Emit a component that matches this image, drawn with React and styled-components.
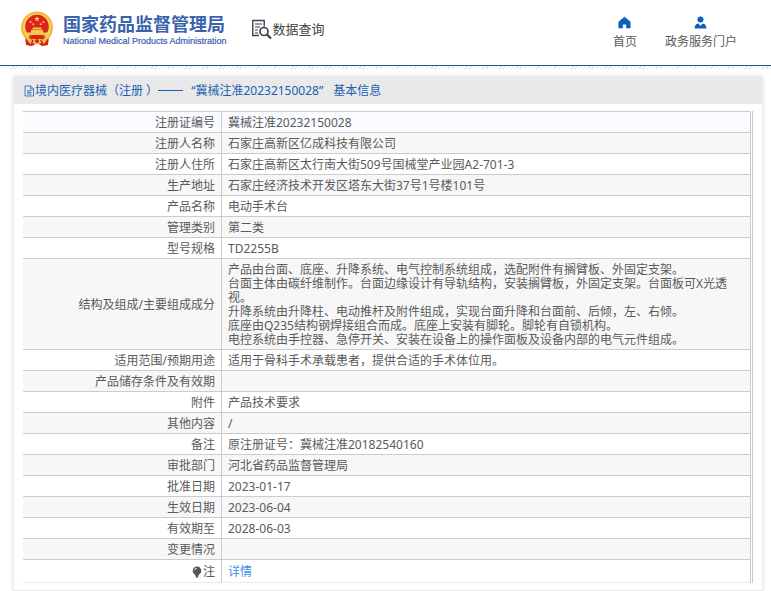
import React from "react";
import styled, { createGlobalStyle } from "styled-components";

const GlobalStyle = createGlobalStyle`
    * {
        box-sizing: border-box;
    }

    body {
        margin: 0;
        background: #ffffff;
        color: #5a5a5a;
        font-family: "Noto Sans", "Noto Sans CJK SC", sans-serif;
        font-size: 12px;
        line-height: 14px;
    }

    a {
        text-decoration: none;
    }
`;

const Header = styled.header`
    display: flex;
    align-items: center;
    height: 66px;
    padding: 0 34px 8px 20px;
    border-bottom: 1px solid #1d5a93;
`;

const HatchStrip = styled.div`
    height: 3px;
    margin-bottom: 7px;
    background: repeating-linear-gradient(
        135deg,
        #e2e2e8 0 1px,
        #ffffff 1px 3px
    );
`;

const Brand = styled.a`
    display: flex;
    align-items: center;
    gap: 9px;
    color: #3a62ad;
`;

const BrandText = styled.span`
    display: flex;
    flex-direction: column;
    padding-top: 2px;
    white-space: nowrap;
`;

const BrandName = styled.strong`
    font-size: 18px;
    line-height: 22px;
    font-weight: 700;
`;

const BrandEnglish = styled.span`
    font-family: "Liberation Sans", Arial, sans-serif;
    font-size: 9px;
    line-height: 12px;
    -webkit-text-stroke: 0.2px #3a62ad;
`;

const QueryTitle = styled.div`
    display: flex;
    align-items: center;
    margin-left: 24px;
    color: #444444;
    font-size: 13px;
    line-height: 20px;
    white-space: nowrap;
`;

const Nav = styled.nav`
    display: flex;
    gap: 28px;
    margin-left: auto;
    padding-top: 8px;
`;

const NavLink = styled.a`
    display: flex;
    flex-direction: column;
    align-items: center;
    gap: 6px;
    color: #5a5a5a;
    white-space: nowrap;
`;

const Card = styled.main`
    margin: 0 8px 0 13px;
    padding-bottom: 7px;
    border: 1px solid #e8e8e8;
    border-top: 0;
    box-shadow: 0 0 6px rgba(0, 0, 0, 0.1);
`;

const CardTitle = styled.h1`
    display: flex;
    align-items: center;
    height: 28px;
    margin: 0 0 7px;
    padding: 1px 10px 0;
    background: #e9e9e9;
    color: #1a5fb4;
    font-size: 12px;
    font-weight: 400;
    white-space: nowrap;
`;

const Dash = styled.span`
    width: 25px;
    height: 1px;
    margin-right: 8px;
    background: #1a5fb4;
`;

const TitleSuffix = styled.span`
    margin-left: 10px;
`;

const TableFrame = styled.div`
    margin: 0 9px;
    padding-right: 1px;
    border-right: 1px solid #c9cacf;
`;

const InfoTable = styled.table`
    width: 100%;
    border-collapse: separate;
    border-spacing: 0;
    border-top: 1px solid #cccccc;
    border-right: 1px solid #c9cacf;
`;

const Row = styled.tr`
    background: #ffffff;

    &:nth-child(even) {
        background: #f7f7f7;
    }

    &:first-child {
        background: #f9fbfe;
    }

    &:last-child > * {
        height: 23px;
        border-bottom-color: #ebebeb;
    }
`;

const Label = styled.th`
    width: 199px;
    padding: 4px 6px 2px;
    border-right: 1px solid #cccccc;
    border-bottom: 1px solid #cccccc;
    font-weight: 400;
    text-align: right;
`;

const Value = styled.td`
    height: 21px;
    padding: 4px 14px 2px 6px;
    border-bottom: 1px solid #cccccc;
`;

const Paragraph = styled.p`
    margin: 0;
`;

const LabelContent = styled.span`
    display: flex;
    align-items: center;
    justify-content: flex-end;
    gap: 1px;
`;

const DetailLink = styled.a`
    color: #3a8ee6;
`;

const rows = [
    ["注册证编号", "冀械注准20232150028"],
    ["注册人名称", "石家庄高新区亿成科技有限公司"],
    ["注册人住所", "石家庄高新区太行南大街509号国械堂产业园A2-701-3"],
    ["生产地址", "石家庄经济技术开发区塔东大街37号1号楼101号"],
    ["产品名称", "电动手术台"],
    ["管理类别", "第二类"],
    ["型号规格", "TD2255B"],
    [
        "结构及组成/主要组成成分",
        [
            "产品由台面、底座、升降系统、电气控制系统组成，选配附件有搁臂板、外固定支架。",
            "台面主体由碳纤维制作。台面边缘设计有导轨结构，安装搁臂板，外固定支架。台面板可X光透视。",
            "升降系统由升降柱、电动推杆及附件组成，实现台面升降和台面前、后倾，左、右倾。",
            "底座由Q235结构钢焊接组合而成。底座上安装有脚轮。脚轮有自锁机构。",
            "电控系统由手控器、急停开关、安装在设备上的操作面板及设备内部的电气元件组成。",
        ],
    ],
    ["适用范围/预期用途", "适用于骨科手术承载患者，提供合适的手术体位用。"],
    ["产品储存条件及有效期", ""],
    ["附件", "产品技术要求"],
    ["其他内容", "/"],
    ["备注", "原注册证号：冀械注准20182540160"],
    ["审批部门", "河北省药品监督管理局"],
    ["批准日期", "2023-01-17"],
    ["生效日期", "2023-06-04"],
    ["有效期至", "2028-06-03"],
    ["变更情况", ""],
];

function Emblem() {
    return (
        <svg width="34" height="36" viewBox="0 0 34 36" aria-hidden="true">
            <path d="M5 24h24l-1 10-6 1-5-3-5 3-6-1z" fill="#d6231c" />
            <circle cx="17" cy="16.5" r="16" fill="#efb93c" />
            <circle cx="17" cy="16.5" r="14" fill="#f7cf5c" />
            <circle cx="17" cy="15.5" r="11.8" fill="#d9251d" />
            <path
                d="M17 5l.8 1.9 2 .1-1.6 1.3.6 2-1.8-1.1-1.8 1.1.6-2L14.2 7l2-.1z"
                fill="#fbd75f"
            />
            <g fill="#f6c84f">
                <circle cx="10.5" cy="11" r="1" />
                <circle cx="13.3" cy="13.3" r="1" />
                <circle cx="20.7" cy="13.3" r="1" />
                <circle cx="23.5" cy="11" r="1" />
                <path d="M13 16.5h8l1 2h-10zM11 19h12v2.5h4V24H7v-2.5h4z" />
            </g>
            <path d="M8 25.5h18l-3 3H11z" fill="#d9251d" />
            <path
                d="M6 29l5 1 2-2h8l2 2 5-1-4 4-4-1-3 2-3-2-4 1z"
                fill="#f4c34a"
            />
            <path
                d="M6 29l4 5M28 29l-4 5M13 29l-2 5M21 29l2 5"
                stroke="#d6231c"
                strokeWidth="1.6"
            />
            <circle cx="17" cy="30" r="2" fill="#d6231c" />
        </svg>
    );
}

function QueryIcon() {
    return (
        <svg
            width="22"
            height="20"
            viewBox="0 0 22 20"
            fill="none"
            stroke="#3c4250"
            aria-hidden="true"
        >
            <path d="M8 16.5H1.8V1.5h11.4v6" strokeWidth="1.4" />
            <path d="M4 5h7M4 8h5M4 11h3M4 14h3" strokeWidth="1.1" />
            <circle cx="13" cy="12.5" r="4" strokeWidth="1.7" />
            <path d="M16 15.5l4 4" strokeWidth="2.3" />
        </svg>
    );
}

function HomeIcon() {
    return (
        <svg width="13" height="13" viewBox="0 0 13 13" aria-hidden="true">
            <path
                d="M6.5 1L.8 5.8V12h3.8V8.2h3.8V12h3.8V5.8z"
                fill="#0d5fc0"
                stroke="#0d5fc0"
                strokeWidth=".6"
                strokeLinejoin="round"
            />
        </svg>
    );
}

function UserIcon() {
    return (
        <svg width="13" height="13" viewBox="0 0 13 13" aria-hidden="true">
            <circle cx="6.5" cy="3.4" r="3" fill="#0d5fc0" />
            <path
                d="M.6 12.4c0-3 1.2-4.6 3.7-5l2.2 2.4 2.2-2.4c2.5.4 3.7 2 3.7 5z"
                fill="#0d5fc0"
            />
        </svg>
    );
}

function FileIcon() {
    return (
        <svg
            width="11"
            height="12"
            viewBox="0 0 11 12"
            fill="none"
            stroke="#1a5fb4"
            aria-hidden="true"
        >
            <path
                d="M1 1h5.8l2.7 2.8V11H1zM6.5 1v3h3M3 5.7h4.5M3 7.4h4.5M3 9.1h4.5"
                strokeWidth=".8"
            />
        </svg>
    );
}

function BulbIcon() {
    return (
        <svg width="10" height="12" viewBox="0 0 10 12" aria-hidden="true">
            <path
                d="M5 .5a4.2 4.2 0 0 0-2.5 7.6L3.8 10v1.5h2.4V10l1.3-1.9A4.2 4.2 0 0 0 5 .5z"
                fill="#555555"
            />
            <path
                d="M2.6 4.5A2.4 2.4 0 0 1 5 2.2"
                stroke="#ffffff"
                strokeWidth=".8"
                fill="none"
            />
        </svg>
    );
}

function InfoRow({ label, value }) {
    return (
        <Row>
            <Label scope="row">{label}</Label>
            <Value>
                {Array.isArray(value)
                    ? value.map((line) => (
                          <Paragraph key={line}>{line}</Paragraph>
                      ))
                    : value}
            </Value>
        </Row>
    );
}

function App() {
    return (
        <>
            <GlobalStyle />
            <Header>
                <Brand href="#">
                    <Emblem />
                    <BrandText>
                        <BrandName>国家药品监督管理局</BrandName>
                        <BrandEnglish>
                            National Medical Products Administration
                        </BrandEnglish>
                    </BrandText>
                </Brand>
                <QueryTitle>
                    <QueryIcon />
                    数据查询
                </QueryTitle>
                <Nav>
                    <NavLink href="#">
                        <HomeIcon />
                        首页
                    </NavLink>
                    <NavLink href="#">
                        <UserIcon />
                        政务服务门户
                    </NavLink>
                </Nav>
            </Header>
            <HatchStrip />
            <Card>
                <CardTitle>
                    <FileIcon />
                    <span>境内医疗器械（注册 ）</span>
                    <Dash />
                    <span>“冀械注准20232150028”</span>
                    <TitleSuffix>基本信息</TitleSuffix>
                </CardTitle>
                <TableFrame>
                    <InfoTable>
                        <tbody>
                            {rows.map(([label, value]) => (
                                <InfoRow
                                    key={label}
                                    label={label}
                                    value={value}
                                />
                            ))}
                            <Row>
                                <Label scope="row">
                                    <LabelContent>
                                        <BulbIcon />注
                                    </LabelContent>
                                </Label>
                                <Value>
                                    <DetailLink href="#">详情</DetailLink>
                                </Value>
                            </Row>
                        </tbody>
                    </InfoTable>
                </TableFrame>
            </Card>
        </>
    );
}

export default App;
